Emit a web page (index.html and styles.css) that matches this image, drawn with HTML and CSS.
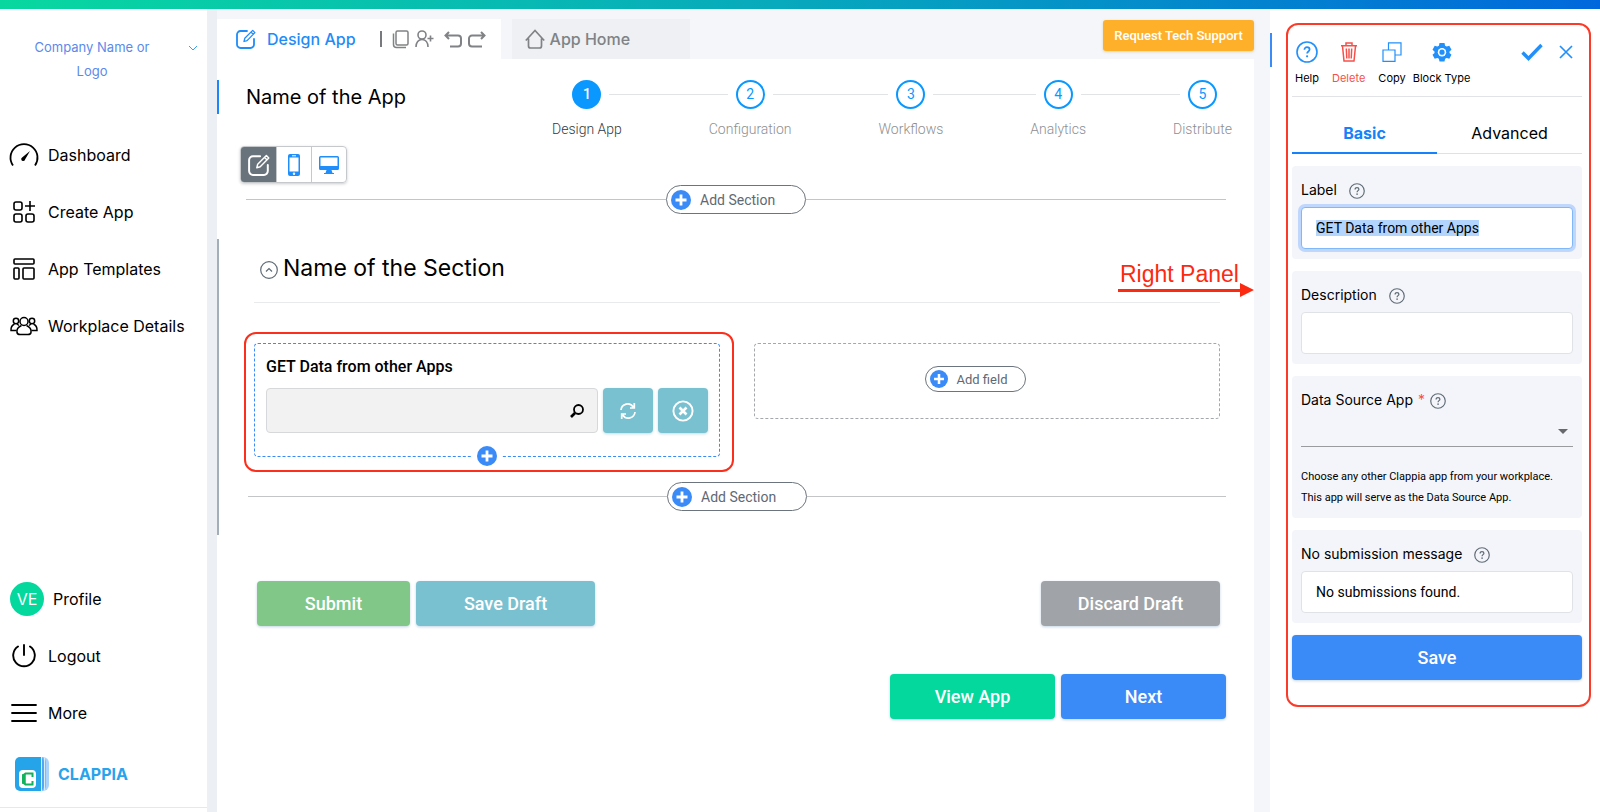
FILE: index.html
```html
<!DOCTYPE html>
<html lang="en">
<head>
	<meta charset="UTF-8">
	<title>Design App</title>
	<link rel="stylesheet" href="styles.css">
</head>
<body>
	<!-- shared icons -->
	<svg class="sprite" aria-hidden="true">
		<symbol id="plus" viewBox="0 0 20 20"><circle cx="10" cy="10" r="10" fill="#3a8af8"/><path d="M10 4.500v11M4.500 10h11" stroke="#fff" stroke-width="2.800"/></symbol>
		<symbol id="question" viewBox="0 0 22 22"><circle cx="11" cy="11" r="10" fill="none" stroke="currentColor" stroke-width="1.6"/><path d="M8.400 8.800c0-1.700 1.200-2.600 2.600-2.600s2.600 1 2.600 2.400c0 1.900-2.500 1.900-2.500 4" fill="none" stroke="currentColor" stroke-width="1.700"/><circle cx="11.100" cy="15.300" r="1.100" fill="currentColor"/></symbol>
		<symbol id="edit" viewBox="0 0 20 20"><path d="M11 2H4.500A3.500 3.500 0 0 0 1 5.500v10A3.500 3.500 0 0 0 4.500 19h10a3.500 3.500 0 0 0 3.500-3.500V10" fill="none" stroke="currentColor" stroke-width="1.800" stroke-linecap="round"/><path d="M8 12.500l.8-3.200L16.700 1.400l2.200 2.200-7.800 8zM15 3.100l2.200 2.200" fill="none" stroke="currentColor" stroke-width="1.300" stroke-linejoin="round"/></symbol>
	</svg>

	<div class="topbar"></div>
	<div class="layout">
		<aside class="sidebar">
			<button class="company" type="button">
				<span>Company Name or Logo</span>
				<svg width="10" height="6" viewBox="0 0 10 6"><path d="M1 1l4 4 4-4" fill="none" stroke="currentColor"/></svg>
			</button>
			<nav class="menu">
				<a href="#">
					<svg class="wide" viewBox="0 0 30 24"><path d="M4 22.500A13.500 13.500 0 1 1 26 22.500" fill="none" stroke="#000" stroke-width="1.800"/><path d="M13.400 14.200L21 8l-4.800 8.200a2 2 0 1 1-2.800-2z"/></svg>
					Dashboard
				</a>
				<a href="#">
					<svg viewBox="0 0 24 24"><g fill="none" stroke="#000" stroke-width="1.600"><rect x="2" y="2" width="8" height="8" rx="2"/><rect x="2" y="14" width="8" height="8" rx="2"/><rect x="14" y="14" width="8" height="8" rx="2"/><path d="M18 1v10M13 6h10"/></g></svg>
					Create App
				</a>
				<a href="#">
					<svg viewBox="0 0 24 24"><g fill="none" stroke="#000" stroke-width="1.600"><rect x="2" y="2" width="20" height="5" rx="1"/><rect x="2" y="11" width="5" height="11" rx="1"/><rect x="11" y="11" width="11" height="11" rx="1"/></g></svg>
					App Templates
				</a>
				<a href="#">
					<svg class="wide" viewBox="0 0 30 24"><g fill="none" stroke="#000" stroke-width="1.500"><circle cx="15" cy="7.500" r="4"/><path d="M12.500 11.500c-3.500 1.500-5 4-4.500 7 .2 1 1.200 2 3 2h8c1.800 0 2.800-1 3-2 .5-3-1-5.500-4.500-7"/><circle cx="7" cy="7" r="2.700"/><circle cx="23" cy="7" r="2.700"/><path d="M5.500 10C3 11.200 1.800 13.500 2 16.500h5.500M24.500 10c2.500 1.200 3.700 3.500 3.500 6.500h-5.500M8 10l2 1.500M22 10l-2 1.500"/></g></svg>
					Workplace Details
				</a>
			</nav>
			<nav class="menu account">
				<a class="profile" href="#"><span class="avatar">VE</span>Profile</a>
				<a href="#">
					<svg viewBox="3 3 24 24"><path d="M9 5.500a10.800 10.800 0 1 0 12 0M15 4v10" fill="none" stroke="#000" stroke-width="1.900" stroke-linecap="round"/></svg>
					Logout
				</a>
				<a href="#">
					<svg class="wide" viewBox="0 0 30 24"><path d="M3 4h24M3 12h24M3 20h24" stroke="#000" stroke-width="1.800" stroke-linecap="round"/></svg>
					More
				</a>
			</nav>
			<a class="brand" href="#">
				<svg width="36" height="36" viewBox="0 0 36 36">
					<rect x="9" y="1" width="26" height="34" rx="6" fill="#a9d3fb"/>
					<rect x="5" y="1" width="27" height="34" rx="5" fill="#7cbcf5"/>
					<rect x="3" y="1" width="27" height="34" rx="5" fill="#4fa9ef"/>
					<path d="M6 1h21v34H6a5 5 0 0 1-5-5V6a5 5 0 0 1 5-5z" fill="#26a4ea"/>
					<path d="M27.500 1v34M30.500 1.500v33" stroke="#d8edfd"/>
					<rect x="5" y="14" width="17" height="18" rx="4" fill="#fff"/>
					<path d="M18.500 21v-3.500h-7L9 19.500v7l2.500 2h7V25" fill="none" stroke="#12b25c" stroke-width="2"/>
					<path d="M10 18v10" stroke="#12b25c" stroke-width="3.500"/>
				</svg>
				CLAPPIA
			</a>
		</aside>

		<main class="main">
			<div class="tabs">
				<div class="tab active">
					<a href="#"><svg width="20" height="20"><use href="#edit"/></svg>Design App</a>
					<span class="bar"></span>
					<button type="button" aria-label="Copy app"><svg width="18" height="20" viewBox="0 0 18 20"><rect x="4" y="2" width="12" height="14" rx="1.500" fill="none" stroke="currentColor" stroke-width="1.500"/><path d="M1.500 4.500v11a3 3 0 0 0 3 3H14" fill="none" stroke="currentColor" stroke-width="1.500"/></svg></button>
					<button type="button" aria-label="Add user"><svg width="20" height="20" viewBox="0 0 20 20"><g fill="none" stroke="currentColor" stroke-width="1.600"><circle cx="8" cy="6" r="4"/><path d="M2 18c0-4.500 2.500-7.500 6-7.500s6 3 6 7.500M16.500 6.500v6M13.500 9.500h6"/></g></svg></button>
					<button type="button" aria-label="Undo"><svg width="20" height="20" viewBox="0 0 20 20"><path d="M6 3L2.500 6.500 6 10M2.500 6.500H15a3 3 0 0 1 3 3v5a3 3 0 0 1-3 3H7" fill="none" stroke="currentColor" stroke-width="2"/></svg></button>
					<button type="button" aria-label="Redo"><svg width="20" height="20" viewBox="0 0 20 20"><path d="M14 3l3.500 3.500L14 10M17.500 6.500H5a3 3 0 0 0-3 3v5a3 3 0 0 0 3 3h10" fill="none" stroke="currentColor" stroke-width="2"/></svg></button>
				</div>
				<a class="tab home" href="#">
					<svg width="20" height="20" viewBox="0 0 20 20"><path d="M.800 11.500L10 1.500l9.200 10M3.500 9.500V17a2 2 0 0 0 2 2h9a2 2 0 0 0 2-2V9.500" fill="none" stroke="currentColor" stroke-width="1.700"/></svg>
					App Home
				</a>
				<button class="support" type="button">Request Tech Support</button>
			</div>

			<div class="canvas">
				<header class="app-head">
					<h1>Name of the App</h1>
					<ol class="steps">
						<li class="current"><span>1</span>Design App</li>
						<li><span>2</span>Configuration</li>
						<li><span>3</span>Workflows</li>
						<li><span>4</span>Analytics</li>
						<li><span>5</span>Distribute</li>
					</ol>
				</header>

				<div class="views">
					<button class="on" type="button" aria-label="Edit"><svg width="22" height="22"><use href="#edit"/></svg></button>
					<button type="button" aria-label="Mobile preview"><svg width="12" height="22" viewBox="0 0 12 22"><rect width="12" height="22" rx="2" fill="#1f8efa"/><path d="M1.500 3.500h9v14h-9z" fill="#fff"/><circle cx="6" cy="19.700" r="1.200" fill="#fff"/><path d="M4 1.800h4" stroke="#fff"/></svg></button>
					<button type="button" aria-label="Desktop preview"><svg width="20" height="20" viewBox="0 0 20 20"><path d="M1.500 1h17A1.500 1.500 0 0 1 20 2.500v11a1.500 1.500 0 0 1-1.500 1.500h-6l1 3h1.500v1H5v-1h1.500l1-3h-6A1.500 1.500 0 0 1 0 13.500v-11A1.500 1.500 0 0 1 1.500 1z" fill="#1f8efa"/><path d="M1.500 2.500h17v8.500h-17z" fill="#fff"/></svg></button>
				</div>

				<div class="divider"><button class="pill" type="button"><svg width="20" height="20"><use href="#plus"/></svg>Add Section</button></div>

				<section class="section">
					<div class="section-head">
						<button type="button" aria-label="Collapse section"><svg width="18" height="18" viewBox="0 0 18 18"><circle cx="9" cy="9" r="8.300" fill="none" stroke="#5f6b75" stroke-width="1.200"/><path d="M6 10.500l3-3 3 3" fill="none" stroke="#5f6b75" stroke-width="1.200"/></svg></button>
						<h2>Name of the Section</h2>
						<div class="callout">
							<p>Right Panel</p>
							<div class="arrow"></div>
						</div>
					</div>
					<div class="fields">
						<div class="marked">
							<div class="field">
								<label for="lookup">GET Data from other Apps</label>
								<div class="lookup">
									<div class="search">
										<input id="lookup" type="text" readonly>
										<svg width="14" height="14" viewBox="0 0 14 14"><circle cx="8.500" cy="5.500" r="4.500" fill="none" stroke="#000" stroke-width="1.800"/><path d="M5 9l-4 4" stroke="#000" stroke-width="2.600"/></svg>
									</div>
									<button type="button" aria-label="Refresh"><svg width="16" height="18" viewBox="0 0 16 18"><path d="M1 8a6.700 6.700 0 0 1 12.300-3M15 10a6.700 6.700 0 0 1-12.300 3M14.300 1v5H10M1.700 17v-5H6" fill="none" stroke="#fff" stroke-width="1.700"/></svg></button>
									<button type="button" aria-label="Clear"><svg width="22" height="22" viewBox="0 0 22 22"><circle cx="11" cy="11" r="9.600" fill="none" stroke="#fff" stroke-width="1.900"/><path d="M7.500 7.500l7 7M14.500 7.500l-7 7" stroke="#fff" stroke-width="2.600"/></svg></button>
								</div>
								<button class="add" type="button" aria-label="Add field below"><svg width="20" height="20"><use href="#plus"/></svg></button>
							</div>
						</div>
						<div class="empty"><button class="pill small" type="button"><svg width="18" height="18"><use href="#plus"/></svg>Add field</button></div>
					</div>
					<div class="divider"><button class="pill" type="button"><svg width="20" height="20"><use href="#plus"/></svg>Add Section</button></div>
				</section>

				<div class="form-actions">
					<button class="btn green" type="button">Submit</button>
					<button class="btn teal" type="button">Save Draft</button>
					<button class="btn gray" type="button">Discard Draft</button>
				</div>
				<div class="page-actions">
					<button class="btn mint" type="button">View App</button>
					<button class="btn blue" type="button">Next</button>
				</div>
			</div>
		</main>

		<aside class="panel">
			<div class="panel-box">
				<div class="tools">
					<button type="button"><svg width="22" height="22"><use href="#question"/></svg>Help</button>
					<button class="delete" type="button"><svg width="18" height="20" viewBox="0 0 18 20"><path d="M1 3.700h16M6 3.500V1h6v2.500M2.500 4L4 19h10l1.500-15M6.300 6.500l.5 10M9 6.500v10M11.700 6.500l-.5 10" fill="none" stroke="currentColor" stroke-width="1.500"/></svg>Delete</button>
					<button type="button"><svg width="20" height="20" viewBox="0 0 20 20"><path d="M1 8h12v11.300H1zM6.500 8V.800H19V13h-6" fill="none" stroke="currentColor" stroke-width="1.200"/></svg>Copy</button>
					<button type="button"><svg width="20" height="20" viewBox="0 0 20 20"><path d="M7.500 1h5l.6 2.700 1.600.9 2.600-.8 2.200 4-2 1.700v1.500l2 1.700-2.200 4-2.600-.8-1.600.9-.6 2.700h-5l-.6-2.700-1.600-.9-2.600.8-2.200-4 2-1.700V9.500l-2-1.700 2.200-4 2.600.8 1.600-.9z" fill="currentColor"/><circle cx="10" cy="10.200" r="4.200" fill="#fff"/><circle cx="10" cy="10.200" r="2.600" fill="currentColor"/></svg>Block Type</button>
					<button class="confirm" type="button" aria-label="Confirm"><svg width="22" height="18" viewBox="0 0 22 18"><path d="M1.500 9.500l6 6L20.500 2" fill="none" stroke="currentColor" stroke-width="3.400"/></svg></button>
					<button type="button" aria-label="Close"><svg width="14" height="14" viewBox="0 0 14 14"><path d="M1 1l12 12M13 1L1 13" fill="none" stroke="currentColor" stroke-width="1.700"/></svg></button>
				</div>
				<div class="panel-tabs">
					<button class="on" type="button">Basic</button>
					<button type="button">Advanced</button>
				</div>
				<form class="settings">
					<div class="card">
						<label for="field-label">Label <svg width="16" height="16"><use href="#question"/></svg></label>
						<input id="field-label" type="text" value="GET Data from other Apps">
					</div>
					<div class="card">
						<label for="description">Description <svg width="16" height="16"><use href="#question"/></svg></label>
						<input id="description" type="text">
					</div>
					<div class="card">
						<label class="required" for="source">Data Source App <b>*</b> <svg width="16" height="16"><use href="#question"/></svg></label>
						<div class="select">
							<select id="source"><option></option></select>
						</div>
						<p>Choose any other Clappia app from your workplace.<br>This app will serve as the Data Source App.</p>
					</div>
					<div class="card">
						<label for="message">No submission message <svg width="16" height="16"><use href="#question"/></svg></label>
						<input id="message" type="text" value="No submissions found.">
					</div>
					<button class="btn blue" type="button">Save</button>
				</form>
			</div>
		</aside>
	</div>

	<script type="text/javascript">
		// label is ready to be typed over
		var label = document.querySelector("#field-label");
		label.focus();
		label.select();
	</script>
</body>
</html>
```
FILE: styles.css
```css
*{
	box-sizing: border-box;
}
body,h1,h2,p,ol{
	margin: 0;
	padding: 0;
}
body{
	min-height: 100vh;
	display: flex;
	flex-direction: column;
	background: #f4f6fa;
	color: #000;
	font-family: Inter, "Liberation Sans", sans-serif;
	font-size: 16px;
}
button{
	padding: 0;
	border: 0;
	background: none;
	color: inherit;
	font: inherit;
	cursor: pointer;
}
a{
	color: inherit;
	text-decoration: none;
}
svg{
	display: block;
	flex: none;
}
.sprite{
	position: absolute;
	width: 0;
	height: 0;
}
.topbar{
	height: 9px;
	background: linear-gradient(90deg, #08d8a0, #07a8bd 50%, #0068dc);
}
.layout{
	flex: 1;
	display: flex;
}

/* sidebar */
.sidebar{
	width: 217px;
	flex: none;
	display: flex;
	flex-direction: column;
	background: #fff;
	border-right: 10px solid #eceff3;
	padding-bottom: 4px;
}
.company{
	display: flex;
	align-items: flex-start;
	justify-content: space-between;
	padding: 26px 9px 0 32px;
	color: #5c8aea;
	font-size: 13px;
	line-height: 24px;
}
.company span{
	width: 120px;
}
.company svg{
	margin-top: 10px;
	color: #3c9bf5;
}
.menu{
	display: flex;
	flex-direction: column;
	margin-top: 43px;
}
.menu a{
	height: 57px;
	display: flex;
	align-items: center;
	padding-left: 9px;
	gap: 9px;
}
.menu svg{
	width: 24px;
	height: 24px;
	margin: 0 3px;
}
.menu svg.wide{
	width: 30px;
	margin: 0;
}
.account{
	margin-top: auto;
}
.menu .profile{
	padding-left: 10px;
}
.avatar{
	width: 34px;
	height: 34px;
	border-radius: 50%;
	background: #05d89d;
	color: #fff;
	text-align: center;
	line-height: 34px;
}
.brand{
	display: flex;
	align-items: center;
	gap: 8px;
	height: 67px;
	padding-left: 14px;
	border-bottom: 1px solid #e6e8ea;
	color: #28a3ec;
	font-size: 16px;
	font-weight: 700;
}

/* main */
.main{
	flex: 1;
	min-width: 0;
	display: flex;
	flex-direction: column;
	padding: 10px 16px 0 0;
}
.tabs{
	display: flex;
	height: 40px;
	color: #808285;
	font-weight: 500;
}
.tab{
	display: flex;
	align-items: center;
	background: #eef0f3;
}
.tab.active{
	background: #fff;
	padding: 0 14px 0 19px;
	gap: 4px;
}
.active a{
	display: flex;
	align-items: center;
	gap: 11px;
	color: #1f8cf8;
}
.active .bar{
	width: 2px;
	height: 16px;
	margin: 0 6px 0 20px;
	background: #77797c;
}
.active button:nth-of-type(3){
	margin-left: 5px;
}
.home{
	width: 178px;
	margin-left: 11px;
	padding-left: 13px;
	gap: 5px;
}
.support{
	width: 151px;
	height: 31px;
	margin: 1px 0 0 auto;
	border-radius: 3px;
	background: #ffb02a;
	box-shadow: 0 1px 3px #ddd3bd;
	color: #fff;
	font-family: Roboto, sans-serif;
	font-size: 13px;
	font-weight: 500;
}
.canvas{
	flex: 1;
	background: #fff;
}
.app-head{
	display: flex;
	justify-content: space-between;
	align-items: flex-start;
	padding: 21px 22px 0 0;
}
h1{
	padding-left: 27px;
	border-left: 2px solid #1b87fa;
	font-size: 20px;
	font-weight: 400;
	line-height: 34px;
}
.steps{
	position: relative;
	flex: 0 1 680px;
	display: flex;
	justify-content: space-between;
	list-style: none;
	color: #8d8f92;
	font-family: Roboto, sans-serif;
	font-size: 14px;
	font-weight: 300;
	line-height: 20px;
}
/* line behind the step circles */
.steps::before{
	content: "";
	position: absolute;
	top: 14px;
	left: 36px;
	right: 30px;
	border-top: 1px solid #e2e3e5;
}
.steps li{
	position: relative;
	display: flex;
	flex-direction: column;
	align-items: center;
	gap: 10px;
}
.steps span{
	width: 29px;
	height: 29px;
	border: 2px solid #0a98ff;
	border-radius: 50%;
	background: #fff;
	box-shadow: 0 0 0 8px #fff;
	color: #0a98ff;
	font-weight: 400;
	line-height: 25px;
	text-align: center;
}
.steps .current{
	color: #33383e;
}
.steps .current span{
	background: #0a98ff;
	color: #fff;
	font-weight: 500;
}
.views{
	display: inline-flex;
	margin: 7px 0 2px 23px;
	border: 1px solid #c6c9cc;
	border-radius: 4px;
	box-shadow: 0 1px 3px #ccc;
	overflow: hidden;
	vertical-align: top;
}
.views button{
	width: 35px;
	height: 35px;
	display: flex;
	align-items: center;
	justify-content: center;
}
.views button + button{
	border-left: 1px solid #c6c9cc;
}
.views .on{
	background: #69737c;
	color: #fff;
}
.divider{
	display: flex;
	align-items: center;
	margin: 0 28px 0 29px;
}
.divider::before,.divider::after{
	content: "";
	flex: 1;
	border-top: 1px solid #c3c5c7;
}
.pill{
	width: 140px;
	height: 29px;
	display: flex;
	align-items: center;
	gap: 9px;
	padding-left: 4px;
	border: 1px solid #6c757d;
	border-radius: 15px;
	background: #fff;
	color: #5f6973;
	font-family: Roboto, sans-serif;
	font-size: 14px;
}
.pill.small{
	width: 101px;
	height: 26px;
	font-size: 13px;
}
.section{
	margin-top: 25px;
	padding: 12px 0 24px;
	border-left: 2px solid #a3afb8;
}
.section-head{
	position: relative;
	display: flex;
	align-items: center;
	gap: 5px;
	margin: 0 34px 0 35px;
	padding: 0 0 17px 6px;
	border-bottom: 1px solid #e9eaec;
}
.section-head button{
	padding-top: 4px;
}
h2{
	font-size: 23px;
	font-weight: 400;
	line-height: 34px;
}
/* note pointing over to the right panel */
.callout{
	position: absolute;
	right: -34px;
	top: 9px;
	width: 136px;
	color: #fb2a10;
	font-family: "Liberation Sans", sans-serif;
	font-size: 23px;
	line-height: 28px;
}
.callout p{
	padding-left: 2px;
}
.arrow{
	height: 14px;
	margin-top: -5px;
	background: currentColor;
	clip-path: polygon(0 6px, calc(100% - 14px) 6px, calc(100% - 14px) 0, 100% 50%, calc(100% - 14px) 100%, calc(100% - 14px) 9px, 0 9px);
}
.fields{
	display: grid;
	grid-template-columns: 1fr 1fr;
	gap: 34px;
	align-items: start;
	margin: 29px 34px 0 35px;
}
.marked{
	margin: 0 -14px 0 -10px;
	padding: 9px 12px 13px 8px;
	border: 2px solid #fb2f1c;
	border-radius: 12px;
}
.field{
	position: relative;
	height: 114px;
	padding: 11px;
	border: 1px dashed #3a8af8;
	border-radius: 4px;
}
.field label{
	display: block;
	margin-bottom: 9px;
	font-family: Roboto, sans-serif;
	font-size: 16px;
	font-weight: 500;
	line-height: 24px;
}
.lookup{
	display: flex;
	gap: 5px;
}
.search{
	flex: 1;
	height: 45px;
	display: flex;
	align-items: center;
	padding-right: 13px;
	border: 1px solid #d6d8da;
	border-radius: 4px;
	background: #f2f2f2;
}
.search input{
	flex: 1;
	min-width: 0;
	border: 0;
	background: none;
}
.lookup button{
	width: 50px;
	display: flex;
	align-items: center;
	justify-content: center;
	border-radius: 4px;
	background: #79c1d0;
	box-shadow: 0 1px 3px #c4dce4;
}
.add{
	position: absolute;
	bottom: -10px;
	left: 50%;
	margin-left: -15px;
	padding: 0 5px;
	background: #fff;
}
.empty{
	display: flex;
	justify-content: center;
	margin-top: 11px;
	padding: 22px 24px 26px 0;
	border: 1px dashed #a5a8ab;
	border-radius: 4px;
}
.section .divider{
	margin-top: 10px;
}
.btn{
	height: 45px;
	border-radius: 4px;
	box-shadow: 0 1px 3px #c4d4e4;
	color: #fff;
	font-family: Roboto, sans-serif;
	font-size: 18px;
	font-weight: 500;
}
.green{ background: #80c788; }
.teal{ background: #79c1d0; }
.gray{ background: #a0a4a8; }
.mint{ background: #05d89d; }
.blue{ background: #3a8af8; }
.form-actions,.page-actions{
	display: flex;
	gap: 6px;
}
.form-actions{
	margin: 46px 34px 0 40px;
}
.form-actions .btn{
	width: 179px;
}
.form-actions .green{
	width: 153px;
}
.form-actions .gray{
	margin-left: auto;
}
.page-actions{
	justify-content: flex-end;
	margin: 48px 28px 0 0;
}
.page-actions .btn{
	width: 165px;
}

/* right panel */
.panel{
	width: 330px;
	flex: none;
	padding: 14px 9px 0 0;
	background: #fff;
	display: flex;
	align-items: flex-start;
}
.panel::before{
	content: "";
	width: 2px;
	height: 34px;
	margin: 10px 14px 0 0;
	background: #3a8af8;
}
.panel-box{
	flex: 1;
	min-width: 0;
	padding: 0 7px 25px 4px;
	border: 2px solid #fb3b28;
	border-radius: 12px;
}
.tools{
	display: flex;
	gap: 7px;
	height: 72px;
	padding: 16px 9px 0 3px;
	border-bottom: 1px solid #e2e3e6;
	color: #2290fa;
	font-size: 11px;
	line-height: 14px;
}
.tools button{
	height: 44px;
	display: grid;
	grid-template-rows: 22px 14px;
	row-gap: 8px;
	align-items: center;
	justify-items: center;
	color: #000;
}
.tools svg{
	color: #2290fa;
}
.tools .delete{
	margin: 0 6px;
}
.tools .delete,.tools .delete svg{
	color: #f5504a;
}
.tools .confirm{
	margin: 0 9px 0 auto;
}
.panel-tabs{
	display: flex;
	padding-top: 16px;
}
.panel-tabs button{
	flex: 1;
	height: 41px;
	border-bottom: 1px solid #dfe1e4;
}
.panel-tabs .on{
	border-bottom: 2px solid #1581fb;
	color: #1581fb;
	font-weight: 700;
}
.settings{
	display: flex;
	flex-direction: column;
	gap: 12px;
	padding-top: 12px;
}
.card{
	padding: 11px 9px 10px;
	border-radius: 4px;
	background: #f4f5fa;
}
.card label{
	display: flex;
	align-items: center;
	gap: 12px;
	margin-bottom: 5px;
	font-size: 14px;
	line-height: 25px;
}
.card label svg{
	margin-top: 3px;
	color: #5f6b75;
}
.card .required{
	gap: 5px;
}
.required b{
	color: #f5504a;
	font-weight: 400;
}
.card input{
	display: block;
	width: 100%;
	height: 42px;
	padding: 0 14px;
	border: 1px solid #dfe2e6;
	border-radius: 4px;
	background: #fff;
	color: #000;
	font-family: Roboto, sans-serif;
	font-size: 14px;
}
.card input:focus{
	outline: 0;
	border-color: #80b8fb;
	box-shadow: 0 0 0 3px #bfd7fd;
}
.card input::selection{
	background: #b2d4fd;
	color: #000;
}
.select{
	display: flex;
	align-items: center;
	height: 30px;
	border-bottom: 1px solid #999b9e;
}
.select select{
	flex: 1;
	height: 28px;
	border: 0;
	outline: 0;
	background: none;
	appearance: none;
}
.select::after{
	content: "";
	margin-right: 5px;
	border: 5px solid transparent;
	border-top-color: #66686b;
	border-bottom: 0;
}
.card p{
	margin-top: 19px;
	font-family: Roboto, sans-serif;
	font-size: 11px;
	line-height: 21px;
}
```
